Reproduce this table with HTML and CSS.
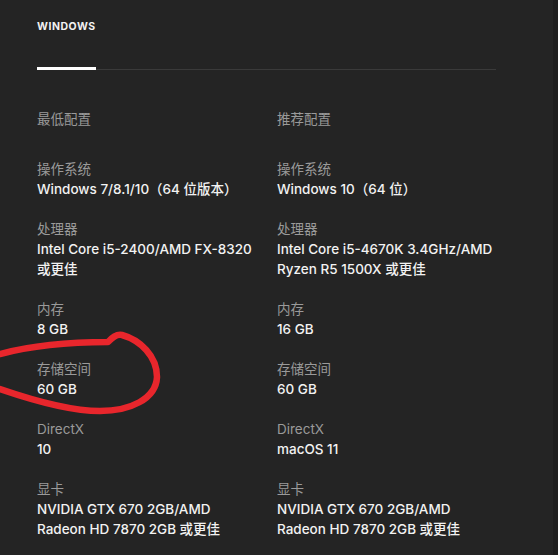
FILE: index.html
```html
<!DOCTYPE html>
<html lang="zh-CN">
<head>
    <meta charset="UTF-8">
    <meta name="viewport" content="width=device-width, initial-scale=1.0">
    <title>系统需求</title>
    <link rel="stylesheet" href="styles.css">
</head>
<body>
    <div class="page">
        <div class="specs">
            <div class="tabs">
                <div class="tab active">Windows</div>
            </div>

            <div class="grid">
                <div class="col-title">最低配置</div>
                <div class="col-title">推荐配置</div>

                <div class="item">
                    <div class="label">操作系统</div>
                    <div class="value">Windows 7/8.1/10（64 位版本）</div>
                </div>
                <div class="item">
                    <div class="label">操作系统</div>
                    <div class="value">Windows 10（64 位）</div>
                </div>

                <div class="item">
                    <div class="label">处理器</div>
                    <div class="value">Intel Core i5-2400/AMD FX-8320 或更佳</div>
                </div>
                <div class="item">
                    <div class="label">处理器</div>
                    <div class="value">Intel Core i5-4670K 3.4GHz/AMD Ryzen R5 1500X 或更佳</div>
                </div>

                <div class="item">
                    <div class="label">内存</div>
                    <div class="value">8 GB</div>
                </div>
                <div class="item">
                    <div class="label">内存</div>
                    <div class="value">16 GB</div>
                </div>

                <div class="item">
                    <div class="label">存储空间</div>
                    <div class="value">60 GB</div>
                </div>
                <div class="item">
                    <div class="label">存储空间</div>
                    <div class="value">60 GB</div>
                </div>

                <div class="item">
                    <div class="label">DirectX</div>
                    <div class="value">10</div>
                </div>
                <div class="item">
                    <div class="label">DirectX</div>
                    <div class="value">macOS 11</div>
                </div>

                <div class="item">
                    <div class="label">显卡</div>
                    <div class="value">NVIDIA GTX 670 2GB/AMD Radeon HD 7870 2GB 或更佳</div>
                </div>
                <div class="item">
                    <div class="label">显卡</div>
                    <div class="value">NVIDIA GTX 670 2GB/AMD Radeon HD 7870 2GB 或更佳</div>
                </div>
            </div>
        </div>
        <div class="edge"></div>
    </div>

    <!-- hand-drawn red mark around the storage row -->
    <svg class="mark" width="170" height="90" viewBox="0 330 170 90">
        <path d="M0 354 C30 346 70 342 108 342 C112 338 116 334 122 335 C140 340 157 356 157 377 C156 399 130 411 100 411 C70 411 35 401 0 389"
              fill="none" stroke="#e8262c" stroke-width="6.5" stroke-linecap="round" stroke-linejoin="round"/>
    </svg>
</body>
</html>
```

FILE: styles.css
```css
body {
    margin: 0;
    background: #242424;
    font-family: "Inter", "Noto Sans CJK SC", sans-serif;
    font-size: 13.5px;
}
.page {
    display: flex;
    min-height: 555px;
}
.specs {
    width: 459px;
    padding: 19px 0 0 37px;
}
.edge {
    margin-left: auto;
    width: 5px;
    background: #1e1e1e;
}
.tabs {
    display: flex;
    border-bottom: 1px solid #3a3a3a;
}
.tab {
    font-size: 10.5px;
    line-height: 16px;
    font-weight: 700;
    letter-spacing: 0.05em;
    text-transform: uppercase;
    color: #f2f2f2;
    padding-bottom: 32px;
}
.tab.active {
    border-bottom: 3px solid #fff;
    margin-bottom: -1px;
}
.grid {
    display: grid;
    grid-template-columns: 220px 1fr;
    column-gap: 20px;
    margin-top: 39px;
    line-height: 20px;
}
.col-title {
    color: #9a9a9a;
    margin-bottom: 30px;
}
.item {
    margin-bottom: 20px;
}
.label {
    color: #9a9a9a;
}
.value {
    color: #f2f2f2;
    font-weight: 500;
}
.mark {
    position: absolute;
    left: 0;
    top: 330px;
}
```
